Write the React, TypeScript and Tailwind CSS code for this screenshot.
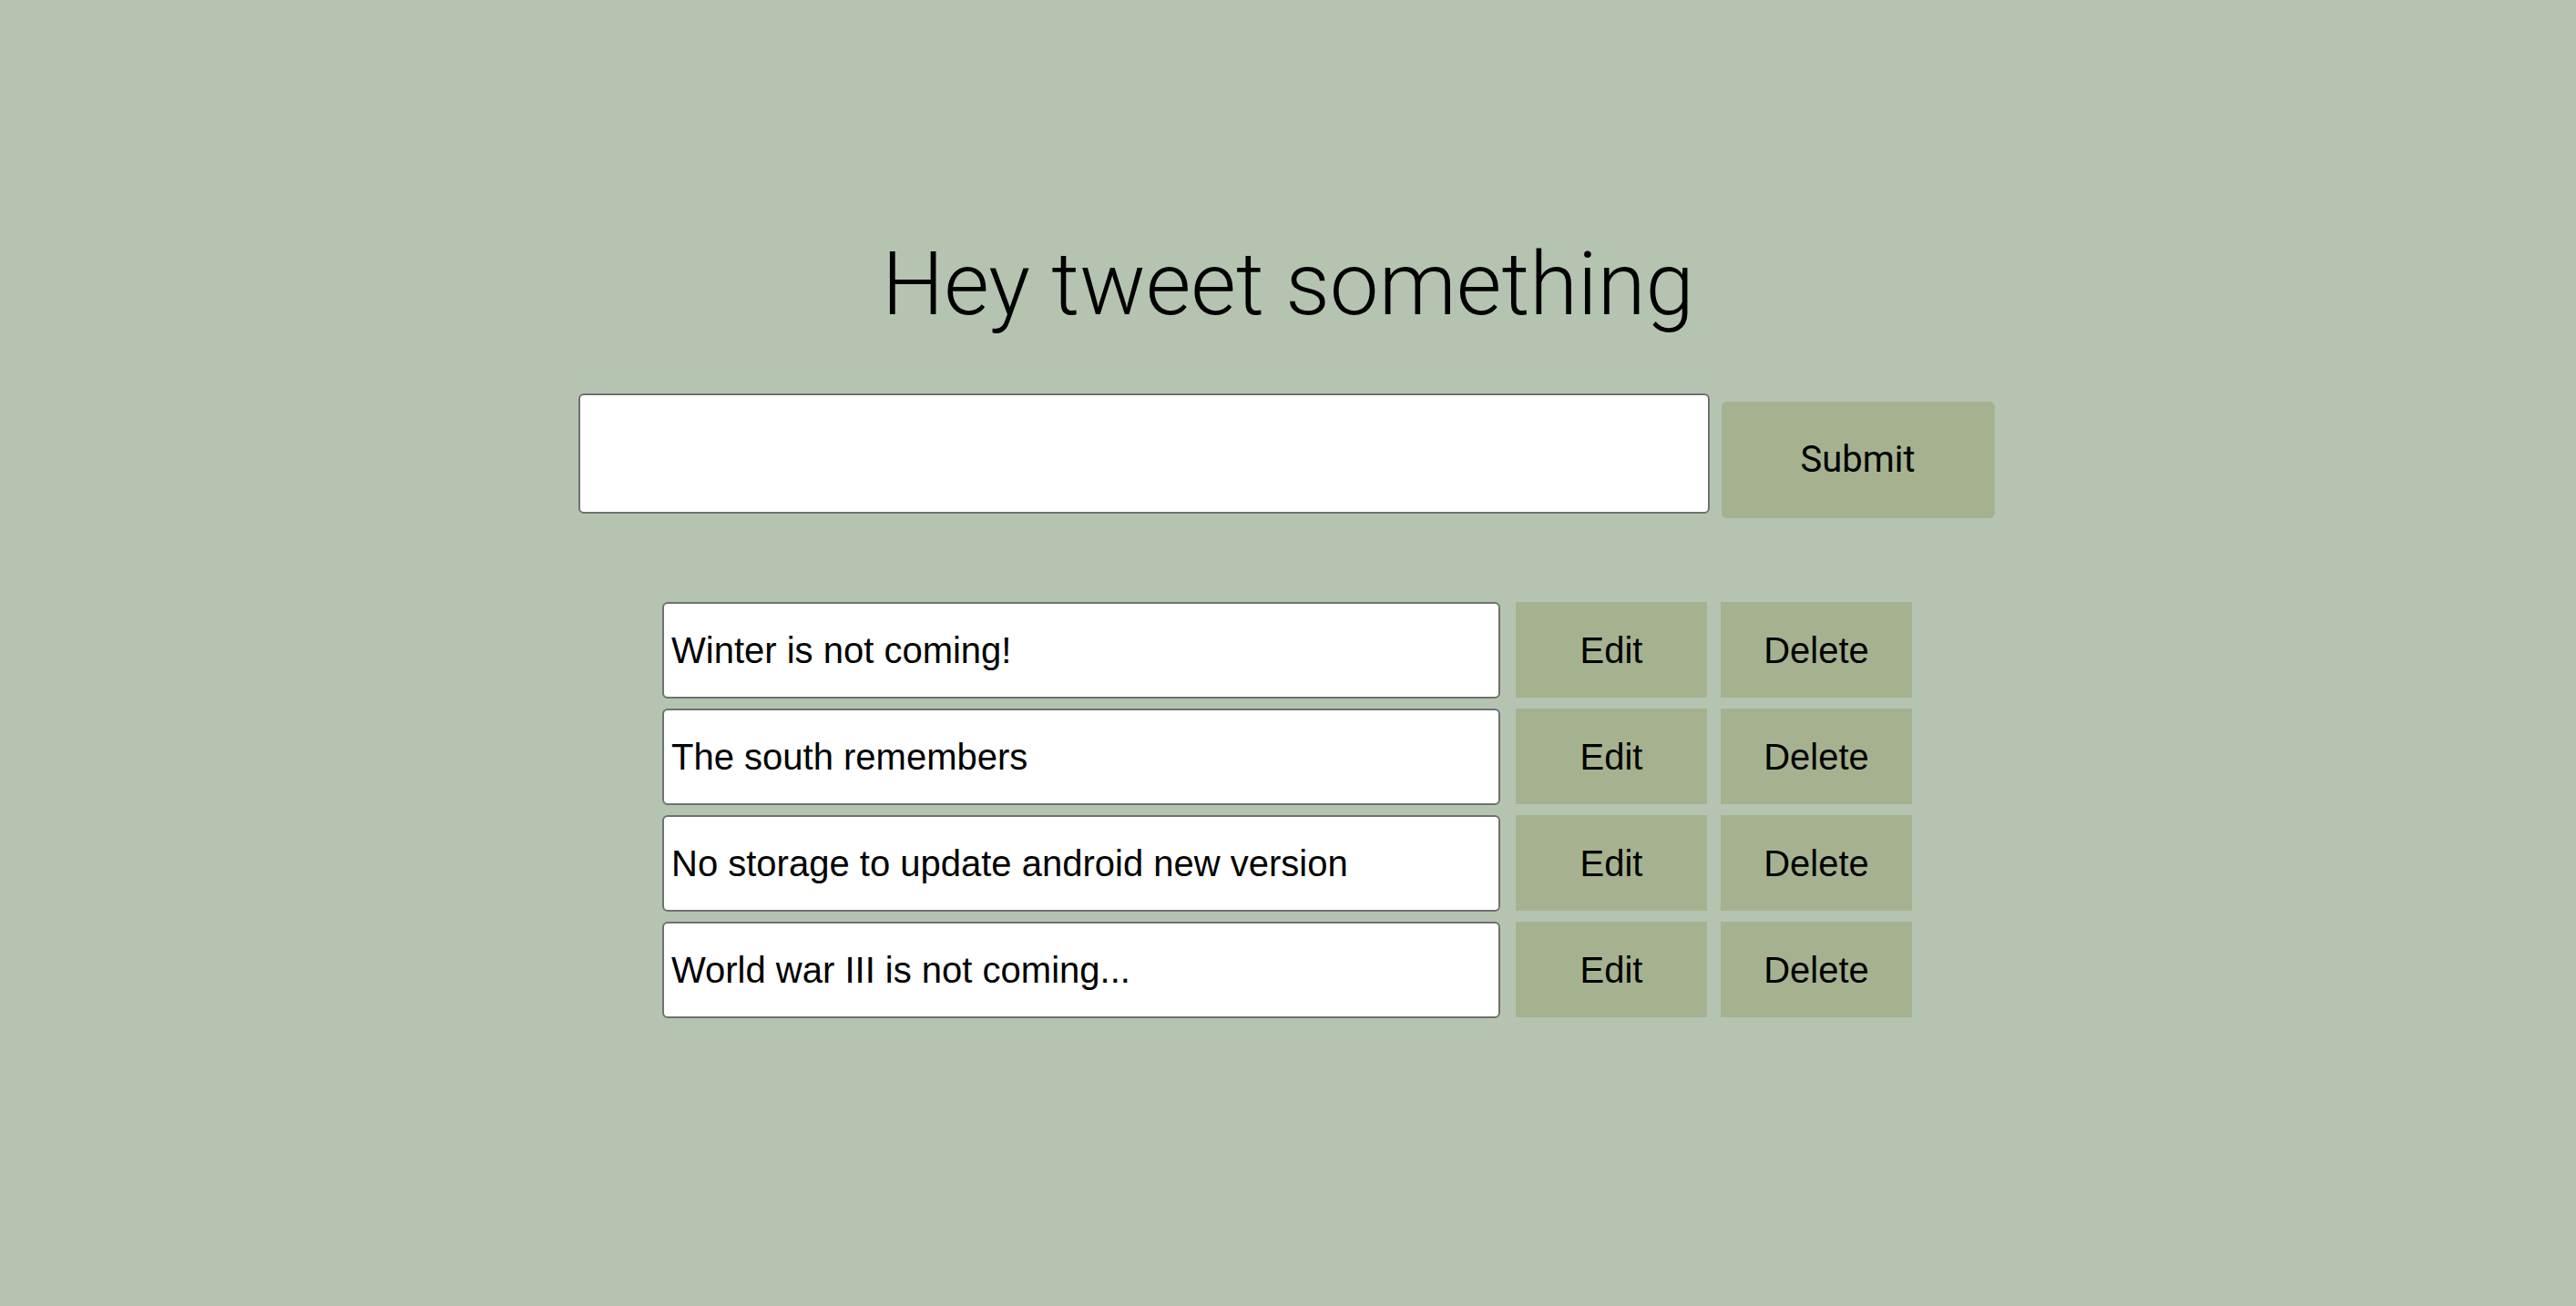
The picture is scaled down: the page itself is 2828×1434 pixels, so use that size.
import React, { useState } from 'react';

type Tweet = { id: number; text: string };

const initialTweets: Tweet[] = [
  { id: 1, text: 'Winter is not coming!' },
  { id: 2, text: 'The south remembers' },
  { id: 3, text: 'No storage to update android new version' },
  { id: 4, text: 'World war III is not coming...' },
];

export default function App() {
  const [draft, setDraft] = useState('');
  const [tweets, setTweets] = useState<Tweet[]>(initialTweets);

  const submit = () => {
    if (!draft.trim()) return;
    setTweets([...tweets, { id: Date.now(), text: draft }]);
    setDraft('');
  };

  return (
    <div className="min-h-screen w-full bg-[#b5c4b1] text-black flex flex-col items-center pt-[256px]">
      {/* Heading */}
      <h1 className="font-['Roboto',sans-serif] font-light text-[96px] leading-[112px]">Hey tweet something</h1>

      {/* Compose row */}
      <div className="flex items-start mt-[64px] pr-[4px]">
        <input
          value={draft}
          onChange={(e) => setDraft(e.target.value)}
          className="w-[1242px] h-[132px] bg-white border-2 border-[#707070] rounded-[6px] px-[8px] font-['Liberation_Sans',Arial,sans-serif] text-[40px] outline-none"
        />
        <button
          onClick={submit}
          className="ml-[13px] mt-[9px] w-[300px] h-[128px] bg-[#a6b28f] rounded-[6px] font-['Roboto',sans-serif] text-[40px]"
        >
          Submit
        </button>
      </div>

      {/* Tweet list */}
      <div className="flex flex-col gap-[11px] mt-[92px] pr-[2px]">
        {tweets.map((t) => (
          <div key={t.id} className="flex items-start">
            <input
              readOnly
              value={t.text}
              className="w-[920px] h-[106px] bg-white border-2 border-[#707070] rounded-[6px] pl-[8px] font-['Liberation_Sans',Arial,sans-serif] text-[40px] outline-none"
            />
            <button className="ml-[17px] w-[210px] h-[105px] bg-[#a6b28f] font-['Liberation_Sans',Arial,sans-serif] text-[40px]">
              Edit
            </button>
            <button
              onClick={() => setTweets(tweets.filter((x) => x.id !== t.id))}
              className="ml-[15px] w-[210px] h-[105px] bg-[#a6b28f] font-['Liberation_Sans',Arial,sans-serif] text-[40px]"
            >
              Delete
            </button>
          </div>
        ))}
      </div>
    </div>
  );
}
